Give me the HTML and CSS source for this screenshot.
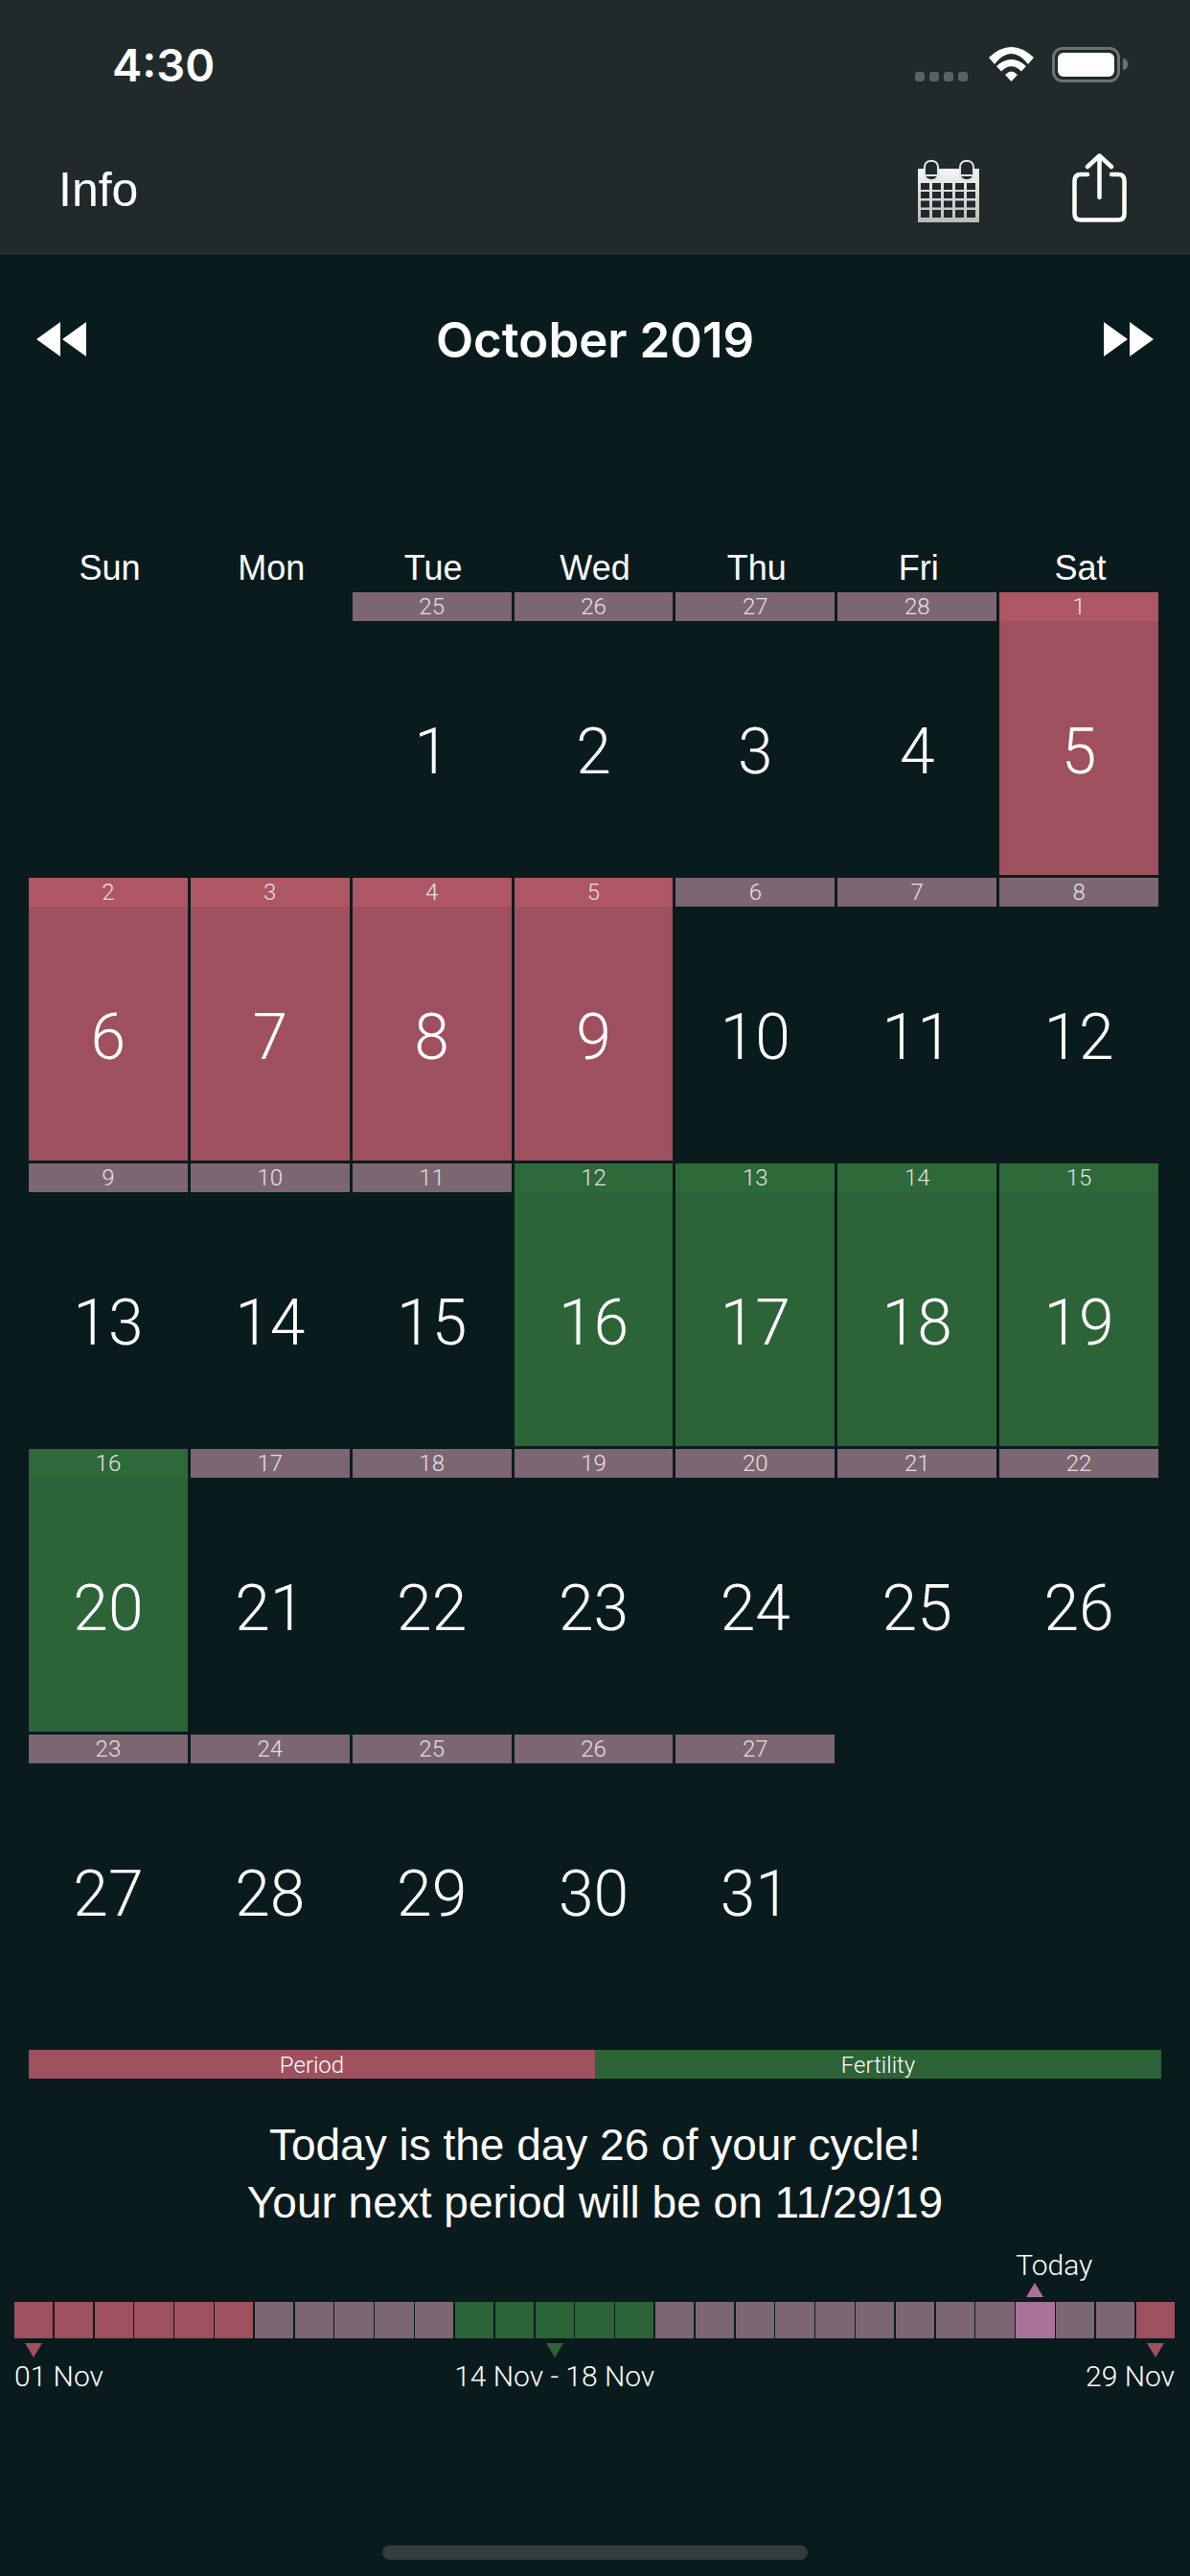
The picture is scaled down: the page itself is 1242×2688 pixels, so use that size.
FILE: index.html
```html
<!DOCTYPE html>
<html lang="en">
<head>
    <meta charset="UTF-8">
    <title>Info - October 2019</title>
    <link rel="stylesheet" href="styles.css">
</head>
<body>
    <header class="topbar">
        <div class="status">
            <span class="clock">4:30</span>
            <div class="status-icons">
                <div class="signal"><i></i><i></i><i></i><i></i></div>
                <svg class="wifi" width="47" height="36" viewBox="0 0 47 36">
                    <path d="M0 11Q23.5-11 47 11L41 18Q23.5-4 6 18Z" fill="#fff"/>
                    <path d="M8 20Q23.5 6 39 20L34 25.5Q23.5 15 13 25.5Z" fill="#fff"/>
                    <path d="M17 29Q23.5 22 30 29L23.5 36Z" fill="#fff"/>
                </svg>
                <div class="battery"><div class="battery-level"></div></div>
            </div>
        </div>
        <nav class="navrow">
            <span class="info">Info</span>
            <div class="nav-icons">
                <svg class="cal-icon" width="64" height="65" viewBox="0 0 64 65">
                    <defs>
                        <linearGradient id="calfill" x1="0" y1="0" x2="0" y2="1">
                            <stop offset="0" stop-color="#f6f6f6"/>
                            <stop offset="1" stop-color="#b9bbba"/>
                        </linearGradient>
                    </defs>
                    <rect y="9" width="64" height="56" fill="url(#calfill)"/>
                    <rect x="7" y="1" width="14" height="20" rx="6" fill="#202a2b" stroke="#e4e4e4" stroke-width="2"/>
                    <rect x="44" y="1" width="14" height="20" rx="6" fill="#202a2b" stroke="#e4e4e4" stroke-width="2"/>
                    <rect x="6" y="15" width="16" height="2" fill="#e4e4e4"/>
                    <rect x="43" y="15" width="16" height="2" fill="#e4e4e4"/>
                    <path d="M3 24h9v7H3zM15 24h9v7h-9zM27 24h9v7h-9zM39 24h9v7h-9zM51 24h9v7h-9zM3 33h9v7H3zM15 33h9v7h-9zM27 33h9v7h-9zM39 33h9v7h-9zM51 33h9v7h-9zM3 42.500h9v7H3zM15 42.500h9v7h-9zM27 42.500h9v7h-9zM39 42.500h9v7h-9zM51 42.500h9v7h-9zM3 52h9v8H3zM15 52h9v8h-9zM27 52h9v8h-9zM39 52h9v8h-9zM51 52h9v8h-9z" fill="#202a2b"/>
                </svg>
                <svg class="share-icon" width="57" height="72" viewBox="0 0 57 72" fill="none" stroke="#fff" stroke-width="4.500" stroke-linecap="round" stroke-linejoin="round">
                    <path d="M16 22H9Q2.500 22 2.500 29V63Q2.500 69.500 9 69.500H48Q54.500 69.500 54.500 63V29Q54.500 22 48 22H41"/>
                    <path d="M28.500 46V3M16 14L28.500 2.500L41 14"/>
                </svg>
            </div>
        </nav>
    </header>

    <div class="month">
        <svg width="52" height="36" viewBox="0 0 52 36"><path d="M25 0V36L0 18ZM52 0V36L27 18Z" fill="#fff"/></svg>
        <h2>October 2019</h2>
        <svg width="52" height="36" viewBox="0 0 52 36"><path d="M0 0V36L25 18ZM27 0V36L52 18Z" fill="#fff"/></svg>
    </div>

    <div class="weekdays">
        <span>Sun</span><span>Mon</span><span>Tue</span><span>Wed</span><span>Thu</span><span>Fri</span><span>Sat</span>
    </div>

    <div class="calendar">
        <div class="cell blank"></div>
        <div class="cell blank"></div>
        <div class="cell"><div class="strip">25</div><div class="num">1</div></div>
        <div class="cell"><div class="strip">26</div><div class="num">2</div></div>
        <div class="cell"><div class="strip">27</div><div class="num">3</div></div>
        <div class="cell"><div class="strip">28</div><div class="num">4</div></div>
        <div class="cell period"><div class="strip">1</div><div class="num">5</div></div>

        <div class="cell period"><div class="strip">2</div><div class="num">6</div></div>
        <div class="cell period"><div class="strip">3</div><div class="num">7</div></div>
        <div class="cell period"><div class="strip">4</div><div class="num">8</div></div>
        <div class="cell period"><div class="strip">5</div><div class="num">9</div></div>
        <div class="cell"><div class="strip">6</div><div class="num">10</div></div>
        <div class="cell"><div class="strip">7</div><div class="num">11</div></div>
        <div class="cell"><div class="strip">8</div><div class="num">12</div></div>

        <div class="cell"><div class="strip">9</div><div class="num">13</div></div>
        <div class="cell"><div class="strip">10</div><div class="num">14</div></div>
        <div class="cell"><div class="strip">11</div><div class="num">15</div></div>
        <div class="cell fertile"><div class="strip">12</div><div class="num">16</div></div>
        <div class="cell fertile"><div class="strip">13</div><div class="num">17</div></div>
        <div class="cell fertile"><div class="strip">14</div><div class="num">18</div></div>
        <div class="cell fertile"><div class="strip">15</div><div class="num">19</div></div>

        <div class="cell fertile"><div class="strip">16</div><div class="num">20</div></div>
        <div class="cell"><div class="strip">17</div><div class="num">21</div></div>
        <div class="cell"><div class="strip">18</div><div class="num">22</div></div>
        <div class="cell"><div class="strip">19</div><div class="num">23</div></div>
        <div class="cell"><div class="strip">20</div><div class="num">24</div></div>
        <div class="cell"><div class="strip">21</div><div class="num">25</div></div>
        <div class="cell"><div class="strip">22</div><div class="num">26</div></div>

        <div class="cell"><div class="strip">23</div><div class="num">27</div></div>
        <div class="cell"><div class="strip">24</div><div class="num">28</div></div>
        <div class="cell"><div class="strip">25</div><div class="num">29</div></div>
        <div class="cell"><div class="strip">26</div><div class="num">30</div></div>
        <div class="cell"><div class="strip">27</div><div class="num">31</div></div>
        <div class="cell blank"></div>
        <div class="cell blank"></div>
    </div>

    <div class="legend">
        <div class="legend-period">Period</div>
        <div class="legend-fertile">Fertility</div>
    </div>

    <p class="message">Today is the day 26 of your cycle!<br>Your next period will be on 11/29/19</p>

    <div class="cycle">
        <span class="today-label">Today</span>
        <i class="mark-up"></i>

        <div class="day red"></div><div class="day red"></div><div class="day red"></div>
        <div class="day red"></div><div class="day red"></div><div class="day red"></div>
        <div class="day"></div><div class="day"></div><div class="day"></div><div class="day"></div><div class="day"></div>
        <div class="day green"></div><div class="day green"></div><div class="day green"></div>
        <div class="day green"></div><div class="day green"></div>
        <div class="day"></div><div class="day"></div><div class="day"></div>
        <div class="day"></div><div class="day"></div><div class="day"></div>
        <div class="day"></div><div class="day"></div><div class="day"></div>
        <div class="day today"></div>
        <div class="day"></div><div class="day"></div>
        <div class="day red"></div>

        <i class="mark-down mark-start"></i>
        <i class="mark-down mark-fertile"></i>
        <i class="mark-down mark-end"></i>

        <span class="date date-start">01 Nov</span>
        <span class="date date-fertile">14 Nov - 18 Nov</span>
        <span class="date date-end">29 Nov</span>
    </div>

    <div class="home-bar"></div>
</body>
</html>
```

FILE: styles.css
```css
* {
    box-sizing: border-box;
}
body {
    margin: 0;
    width: 1242px;
    height: 2688px;
    overflow: hidden;
    background-color: #0a1b1e;
    color: #ffffff;
    font-family: "Liberation Sans", Arial, sans-serif;
}

/* top bar */
.topbar {
    height: 265px;
    background-color: #202a2b;
    border-bottom: 1px solid #333d41;
}
.status {
    display: flex;
    justify-content: space-between;
    height: 132px;
    padding: 44px 73px 0 117px;
}
.clock {
    font-family: Inter, sans-serif;
    font-size: 47px;
    font-weight: 600;
    line-height: 48px;
}
.status-icons {
    display: flex;
    align-items: flex-start;
    padding-top: 5px;
}
.signal {
    display: flex;
    gap: 5px;
    margin: 26px 22px 0 0;
}
.signal i {
    width: 10px;
    height: 10px;
    border-radius: 3px;
    background-color: #5a6361;
}
.wifi {
    margin-right: 19px;
}
.battery {
    position: relative;
    width: 71px;
    height: 37px;
    padding: 3px;
    border: 3px solid #6b7472;
    border-radius: 11px;
}
.battery::after {
    content: "";
    position: absolute;
    right: -11px;
    top: 9px;
    width: 5px;
    height: 12px;
    border-radius: 0 5px 5px 0;
    background-color: #6b7472;
}
.battery-level {
    height: 100%;
    border-radius: 6px;
    background-color: #ffffff;
}
.navrow {
    display: flex;
    justify-content: space-between;
    padding: 28px 66px 0 61px;
}
.info {
    font-size: 50px;
    line-height: 56px;
    margin-top: 10px;
}
.nav-icons {
    display: flex;
    align-items: flex-end;
    gap: 97px;
}

/* month header */
.month {
    display: flex;
    align-items: center;
    justify-content: space-between;
    height: 178px;
    padding: 0 38px;
}
.month h2 {
    margin: 0;
    font-family: Inter, sans-serif;
    font-size: 51px;
    font-weight: 600;
}

/* calendar */
.weekdays {
    display: grid;
    grid-template-columns: repeat(7, 168.86px);
    height: 175px;
    margin-left: 30px;
    padding-top: 130px;
    font-size: 36px;
    line-height: 40px;
    text-align: center;
}
.calendar {
    display: grid;
    grid-template-columns: repeat(7, minmax(0, 1fr));
    grid-auto-rows: 295px;
    gap: 3px;
    width: 1179px;
    margin-left: 30px;
}
.cell {
    display: flex;
    flex-direction: column;
}
.strip {
    height: 30px;
    background-color: #7c6672;
    color: #e6e0e3;
    font-family: Roboto, sans-serif;
    font-size: 24px;
    font-weight: 300;
    line-height: 30px;
    text-align: center;
}
.num {
    flex: 1;
    display: flex;
    align-items: center;
    justify-content: center;
    padding-top: 7px;
    font-family: Roboto, sans-serif;
    font-size: 66px;
    font-weight: 300;
}
.cell.period {
    background-color: #9e505e;
}
.cell.period .strip {
    background-color: #ae5663;
}
.cell.fertile {
    background-color: #2c6337;
}
.cell.fertile .strip {
    background-color: #2d6939;
}

/* legend */
.legend {
    display: flex;
    height: 30px;
    margin: 34px 30px 0;
    font-family: Roboto, sans-serif;
    font-size: 24px;
    font-weight: 300;
    line-height: 32px;
    text-align: center;
}
.legend-period,
.legend-fertile {
    flex: 1;
}
.legend-period {
    background-color: #9e505e;
}
.legend-fertile {
    background-color: #2c6337;
}
.message {
    margin: 39px 0 0;
    font-size: 46px;
    line-height: 60px;
    text-align: center;
}

/* cycle strip */
.cycle {
    display: grid;
    grid-template-columns: repeat(29, minmax(0, 1fr));
    grid-template-rows: 44px 20px 38px 23px 34px;
    column-gap: 1.5px;
    width: 1211px;
    margin: 10px 0 0 15px;
    font-family: Roboto, sans-serif;
    font-weight: 300;
    font-size: 30px;
}
.day {
    grid-row: 3;
    background-color: #7c6672;
}
.day.red {
    background-color: #9e505e;
}
.day.green {
    background-color: #2c6337;
}
.day.today {
    background-color: #a87296;
}
.today-label {
    grid-row: 1;
    grid-column: 26;
    white-space: nowrap;
    line-height: 52px;
}
.date {
    grid-row: 5;
    white-space: nowrap;
    line-height: 34px;
}
.date-start {
    grid-column: 1 / 8;
}
.date-fertile {
    grid-column: 10 / 19;
    justify-self: center;
}
.date-end {
    grid-column: 23 / 30;
    justify-self: end;
}
.mark-up,
.mark-down {
    width: 0;
    height: 0;
    justify-self: center;
    border-left: 9px solid transparent;
    border-right: 9px solid transparent;
}
.mark-up {
    grid-row: 2;
    grid-column: 26;
    border-bottom: 15px solid #a87296;
}
.mark-down {
    grid-row: 4;
    margin-top: 5px;
}
.mark-start {
    grid-column: 1;
    border-top: 15px solid #9e505e;
}
.mark-fertile {
    grid-column: 14;
    border-top: 15px solid #2c6337;
}
.mark-end {
    grid-column: 29;
    border-top: 15px solid #9e505e;
}

.home-bar {
    width: 444px;
    height: 15px;
    margin: 159px auto 0;
    border-radius: 8px;
    background-color: #353c3e;
}
```
